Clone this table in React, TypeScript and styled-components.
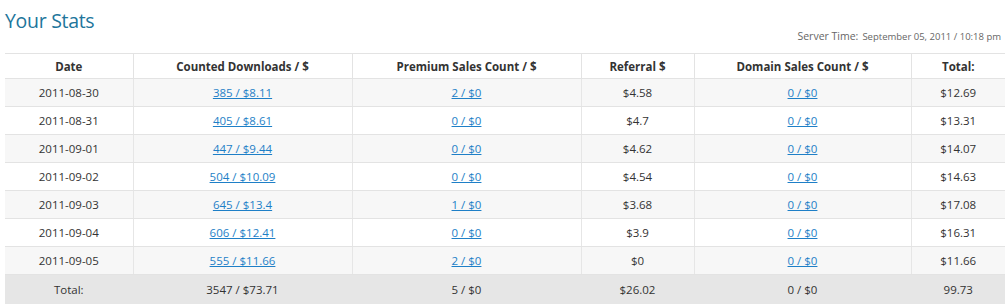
import React from "react";
import styled, { createGlobalStyle } from "styled-components";

const Global = createGlobalStyle`
  html, body { margin: 0; padding: 0; background: #fff; }
  body { font-family: "Open Sans", "Noto Sans", sans-serif; color: #333; }
`;

const Page = styled.div`
  padding: 0 3px 0 5px;
  width: 1000px;
`;

const Title = styled.h2`
  margin: 0;
  padding-top: 10px;
  height: 18px;
  font-size: 19.5px;
  font-weight: 400;
  line-height: 22px;
  color: #21759b;
  letter-spacing: -0.3px;
`;

const ServerLine = styled.div`
  display: flex;
  justify-content: flex-end;
  align-items: baseline;
  gap: 4px;
  height: 16px;
  line-height: 16px;
  margin-bottom: 9px;
  padding-right: 4px;
  color: #666;
`;

const ServerLabel = styled.span`
  font-size: 10.5px;
`;

const ServerValue = styled.span`
  font-size: 9.5px;
`;

const Table = styled.table`
  width: 1000px;
  border-collapse: collapse;
  table-layout: fixed;
  font-size: 11.5px;
`;

const Th = styled.th`
  height: 24px;
  padding: 0;
  font-weight: 700;
  font-size: 11.5px;
  color: #333;
  text-align: center;
  border-top: 1px solid #e3e3e3;
  border-bottom: 1px solid #e3e3e3;
  & + & { border-left: 1px solid #e3e3e3; }
`;

const Tr = styled.tr<{ $variant: "odd" | "even" | "total" }>`
  background: ${(p) =>
    p.$variant === "odd" ? "#f7f7f7" : p.$variant === "total" ? "#e6e6e6" : "#fff"};
`;

const Td = styled.td<{ $total?: boolean }>`
  height: ${(p) => (p.$total ? "29px" : "27px")};
  padding: 0;
  text-align: center;
  color: #333;
  border-bottom: ${(p) => (p.$total ? "none" : "1px solid #e3e3e3")};
  & + & { border-left: 1px solid ${(p) => (p.$total ? "#e6e6e6" : "#e3e3e3")}; }
`;

const Link = styled.a`
  color: #1e7fc7;
  text-decoration: underline;
  cursor: pointer;
`;

const rows = [
  ["2011-08-30", "385 / $8.11", "2 / $0", "$4.58", "0 / $0", "$12.69"],
  ["2011-08-31", "405 / $8.61", "0 / $0", "$4.7", "0 / $0", "$13.31"],
  ["2011-09-01", "447 / $9.44", "0 / $0", "$4.62", "0 / $0", "$14.07"],
  ["2011-09-02", "504 / $10.09", "0 / $0", "$4.54", "0 / $0", "$14.63"],
  ["2011-09-03", "645 / $13.4", "1 / $0", "$3.68", "0 / $0", "$17.08"],
  ["2011-09-04", "606 / $12.41", "0 / $0", "$3.9", "0 / $0", "$16.31"],
  ["2011-09-05", "555 / $11.66", "2 / $0", "$0", "0 / $0", "$11.66"],
];

const widths = [128, 219, 229, 113, 217, 94];
const headers = ["Date", "Counted Downloads / $", "Premium Sales Count / $", "Referral $", "Domain Sales Count / $", "Total:"];
const linkCols = new Set([1, 2, 4]);

export default function App() {
  return (
    <Page>
      <Global />
      <Title>Your Stats</Title>
      <ServerLine>
        <ServerLabel>Server Time:</ServerLabel>
        <ServerValue>September 05, 2011 / 10:18 pm</ServerValue>
      </ServerLine>
      <Table>
        <colgroup>
          {widths.map((w, i) => (
            <col key={i} style={{ width: w }} />
          ))}
        </colgroup>
        <thead>
          <tr>
            {headers.map((h) => (
              <Th key={h}>{h}</Th>
            ))}
          </tr>
        </thead>
        <tbody>
          {rows.map((r, i) => (
            <Tr key={r[0]} $variant={i % 2 === 0 ? "odd" : "even"}>
              {r.map((c, j) => (
                <Td key={j}>{linkCols.has(j) ? <Link>{c}</Link> : c}</Td>
              ))}
            </Tr>
          ))}
          <Tr $variant="total">
            {["Total:", "3547 / $73.71", "5 / $0", "$26.02", "0 / $0", "99.73"].map((c, j) => (
              <Td key={j} $total>
                {c}
              </Td>
            ))}
          </Tr>
        </tbody>
      </Table>
    </Page>
  );
}
